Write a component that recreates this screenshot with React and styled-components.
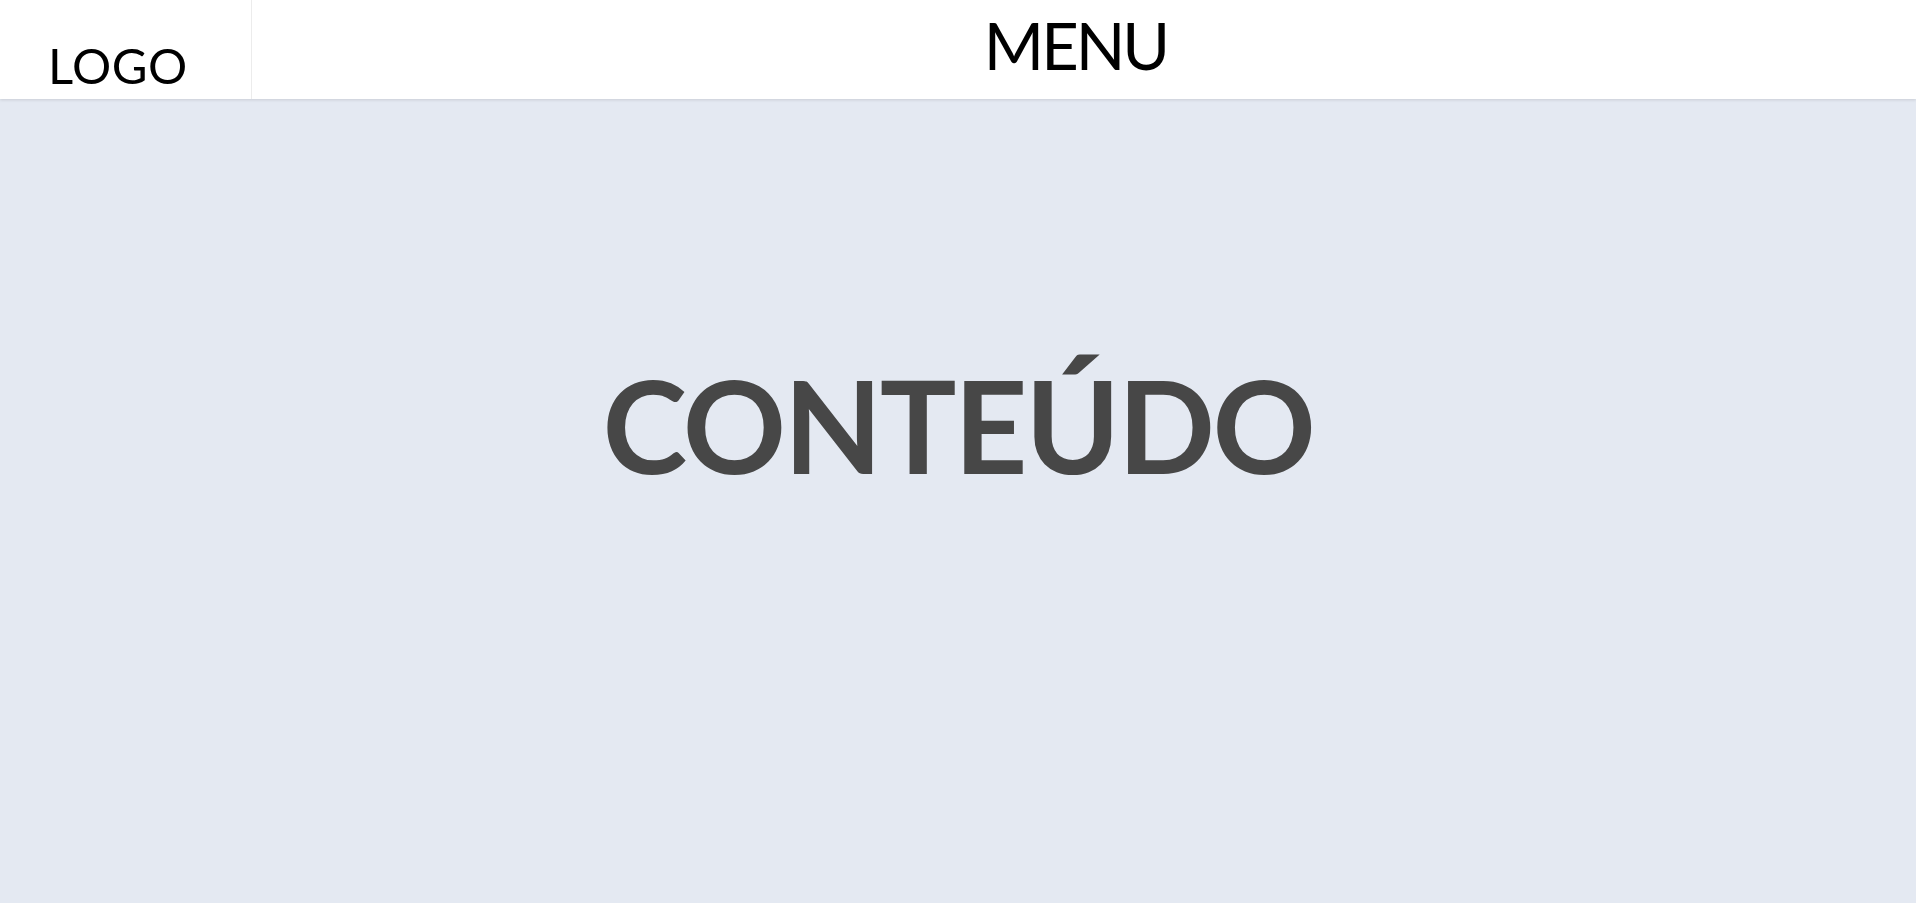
import styled, { createGlobalStyle } from 'styled-components';

const GlobalStyle = createGlobalStyle`
  html, body {
    margin: 0;
    padding: 0;
  }

  body {
    font-family: Lato, 'Open Sans', sans-serif;
    background: #e4e9f2;
  }
`;

const Page = styled.div`
  display: flex;
  flex-direction: column;
  min-height: 100vh;
`;

const Header = styled.header`
  display: grid;
  grid-template-columns: 252px 1fr;
  height: 99px;
  background: #ffffff;
  box-shadow: 0 1px 3px rgba(0, 0, 0, 0.12);
  position: relative;
  z-index: 1;
`;

const LogoBox = styled.div`
  display: flex;
  align-items: flex-end;
  padding: 0 0 4px 48px;
  border-right: 1px solid #ececec;
  font-size: 49px;
  letter-spacing: 0.5px;
  color: #000000;
  line-height: 1.2;
`;

const MenuBox = styled.nav`
  display: flex;
  justify-content: center;
  align-items: flex-start;
  padding: 6px 17px 0 0;
  font-size: 65px;
  letter-spacing: -3px;
  color: #000000;
  line-height: 1.2;
`;

const Content = styled.main`
  flex: 1;
  display: flex;
  justify-content: center;
  align-items: flex-start;
  padding-top: 249px;
`;

const Title = styled.h1`
  margin: 0;
  font-size: 128px;
  font-weight: 700;
  letter-spacing: -2.5px;
  color: #474747;
  line-height: 1.2;
`;

const App = () => {
  return (
    <Page>
      <GlobalStyle />
      <Header>
        <LogoBox>LOGO</LogoBox>
        <MenuBox>MENU</MenuBox>
      </Header>
      <Content>
        <Title>CONTEÚDO</Title>
      </Content>
    </Page>
  );
};

export default App;
